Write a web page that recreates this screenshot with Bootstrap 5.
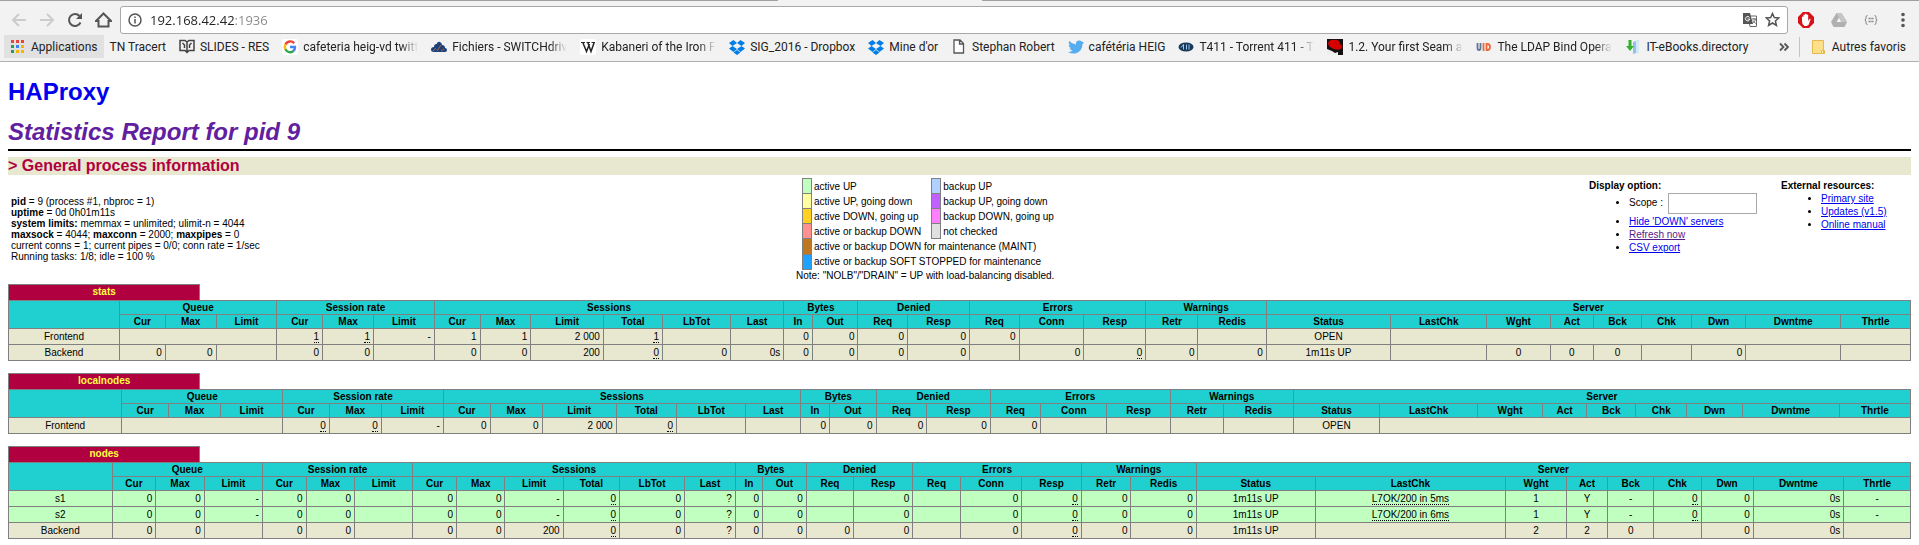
<!DOCTYPE html>
<html lang="en">
<head>
<meta charset="utf-8">
<meta name="viewport" content="width=device-width, initial-scale=1">
<title>Statistics Report for HAProxy</title>
<link rel="stylesheet" href="https://cdn.jsdelivr.net/npm/bootstrap@5.3.0/dist/css/bootstrap.min.css">
<style>
body{font:12px/14px "Liberation Sans",Arial,Helvetica,sans-serif;color:#000;background:#fff}
a{color:#00e}
/* browser frame */
.chrome-top{font:12px/16px Roboto,"Open Sans",sans-serif;background:#f2f2f2;border-bottom:1px solid #b0b0b0;color:#222}
.tabline{height:1px}
.tabline span{background:#a0a0a0}
.tabline .l{flex:778}.tabline .m{flex:204;background:#f2f2f2}.tabline .r{flex:937}
.toolbar{height:33px;padding:4px 11px 0 11px}
.toolbar button,.urlbox button{border:0;background:none;padding:0;line-height:0}
.nav-btns{gap:12px;width:109px}
.urlbox{height:28px;background:#fff;border:1px solid #a9a9a9;border-radius:3px;padding:0 7px}
.urlbox input{border:0;outline:0;padding:0;height:20px;font-family:"Open Sans",sans-serif;font-size:13px;line-height:20px;color:transparent;background:linear-gradient(90deg,#222 85px,#888 85px);-webkit-background-clip:text;background-clip:text}
.ext-btns{gap:17px;padding-left:10px;width:120px}
.marks{height:27px;padding:1px 13px 3px 4px}
.marks a{color:#222;text-decoration:none;gap:5px;margin-right:13px;flex:none}
.marks svg{flex:none}
.marks .apps{background:#e1e1e1;padding:0 7px;height:23px;gap:7px;margin-right:5px}
.marks .cut{width:115px;overflow:hidden;white-space:nowrap;-webkit-mask-image:linear-gradient(90deg,#000 85%,transparent);mask-image:linear-gradient(90deg,#000 85%,transparent)}
.marks .more{border:0;background:none;padding:0 10px 0 0;line-height:0}
.marks .other{border-left:1px solid #c4c4c4;padding-left:12px;margin:0;gap:7px;line-height:20px}
/* report */
.report{padding:16px 8px 0}
.report h1{font-size:24px;line-height:28px;font-weight:bold;margin:0 0 12px}
.report h1 a,.report h2 a{text-decoration:none}
.report h2{font-size:24px;line-height:28px;font-weight:bold;font-style:italic;margin:0}
.report h2 a{color:#6020a0}
.rule{border-top:2px solid #000;margin:3px 0 6px}
.report h3{font-size:16px;line-height:18px;font-weight:bold;color:#b00040;background:#e8e8d0;margin:0}
.info{display:grid;grid-template-columns:788fr 793fr 192fr 130fr;font-size:10px;line-height:11px;padding:3px 0}
.facts{padding:18px 3px 0}
.facts p,.legend p{margin:0}
.legend table{border-collapse:collapse;margin-left:6px}
.legend td{padding:2px;white-space:nowrap}
.legend .sw{width:9px;min-width:9px;border:1px solid gray;padding:2px 4px}
.legend .widest{padding-right:10px}
.opts{padding-top:2px}
.opts ul{margin:1px 0 0;padding-left:40px}
.opts li{margin-top:2px}
.opts .scope input{width:89px;height:21px;border:1px solid #a9a9a9;padding:1px;margin-left:5px;vertical-align:middle}
.opts .visited{color:#551a8b}
.tbl{width:100%;border-collapse:collapse;font-size:10px;line-height:11px;margin-bottom:12px}
.tbl caption{caption-side:top;padding:0;color:#ffff40;font-weight:bold;text-align:left;line-height:12px}
.tbl caption span{display:block;box-sizing:content-box;width:calc(10% - 6px);background:#b00040;border:1px solid gray;border-bottom:0;padding:1px 3px 2px;text-align:center}
.tbl th{background:#20d0d0;border:1px solid gray;padding:1px;font-weight:bold;text-align:center}
.tbl td{background:#e8e8d0;border:1px solid gray;padding:2px 3px;text-align:right;white-space:nowrap}
.tbl .up td{background:#c0ffc0}
.tbl td.ac{text-align:center;padding:2px 4px}
.tbl td.chk{text-align:center;padding:2px 5px}
.tbl u{text-decoration:none;border-bottom:1px dotted #000}
.c-up{background:#c0ffc0}.c-upd{background:#ffffa0}.c-dup{background:#ffd020}.c-down{background:#ff9090}
.c-mnt{background:#c07820}.c-soft{background:#20a0ff}.c-bup{background:#b0d0ff}.c-bupd{background:#c060ff}
.c-bdup{background:#ff80ff}.c-nc{background:#e0e0e0}
</style>
</head>
<body>
<header class="chrome-top">
<div class="tabline d-flex"><span class="l"></span><span class="m"></span><span class="r"></span></div>
<div class="toolbar d-flex align-items-center">
<div class="nav-btns d-flex align-items-center">
<button aria-label="Back"><svg width="16" height="16" viewBox="0 0 16 16" fill="none" stroke="#ccc" stroke-width="2"><path d="M15 8H2M8 2L2 8l6 6"/></svg></button>
<button aria-label="Forward"><svg width="16" height="16" viewBox="0 0 16 16" fill="none" stroke="#ccc" stroke-width="2"><path d="M1 8h13M8 2l6 6-6 6"/></svg></button>
<button aria-label="Reload"><svg width="16" height="16" viewBox="0 0 16 16" fill="none" stroke="#555" stroke-width="2"><path d="M13.500 10.500A6 6 0 1 1 12.500 4"/><path d="M15 1v6H9z" fill="#555" stroke="none"/></svg></button>
<button aria-label="Home"><svg width="17" height="16" viewBox="0 0 17 16" fill="none" stroke="#555" stroke-width="2"><path d="M1 9l7.500-7.500L16 9h-2.500v5.500h-10V9z"/></svg></button>
</div>
<div class="urlbox d-flex align-items-center flex-grow-1">
<svg class="me-2" width="14" height="14" viewBox="0 0 14 14" fill="none" stroke="#555" stroke-width="1.500"><circle cx="7" cy="7" r="6"/><path d="M7 6v4.500M7 3.500V5"/></svg>
<input class="flex-grow-1" type="text" aria-label="Address" value="192.168.42.42:1936">
<button class="me-2" aria-label="Translate"><svg width="14" height="14" viewBox="0 0 14 14"><path d="M5 3h8.500v10.500H7z" fill="#fff" stroke="#666"/><path d="M0 0h7l3 11H0z" fill="#555"/><path d="M6.500 4.500A2.200 2.200 0 1 0 6.500 7V6H4.500" fill="none" stroke="#fff"/><path d="M9 6h4M11 5v1M12.500 6c-.5 2-1.500 3-3 4M10 7.500l2.500 3" fill="none" stroke="#666"/></svg></button>
<button aria-label="Bookmark"><svg width="15" height="15" viewBox="0 0 15 15" fill="none" stroke="#555" stroke-width="1.500"><path d="M7.500 1.500l1.800 4.100 4.400.4-3.300 3 1 4.400-3.900-2.400-3.900 2.400 1-4.400-3.300-3 4.400-.4z"/></svg></button>
</div>
<div class="ext-btns d-flex align-items-center">
<button aria-label="Ad blocker"><svg width="16" height="16" viewBox="0 0 16 16"><path d="M5 0h6l5 5v6l-5 5H5l-5-5V5z" fill="#d9121a"/><path d="M4 9V5q.7-1 1.400 0v2V3q.8-1 1.600 0v3-4q.8-1 1.600 0v4-3q.8-1 1.600 0v6l1.300-2q1.300-.5 1 .7L10.500 13l-2 1h-2l-2-2z" fill="#fff"/></svg></button>
<button aria-label="Drive"><svg width="16" height="16" viewBox="0 0 16 16"><path d="M5.500 1h5L16 10l-2.500 5h-11L0 10z" fill="#b0b0b0"/><path d="M8 5.500L10.500 10h-5z" fill="#f2f2f2"/><path d="M5.500 1L11 10h5L10.500 1z" fill="#c6c6c6"/></svg></button>
<button aria-label="JSON"><svg width="14" height="12" viewBox="0 0 14 12" fill="none" stroke="#888"><path d="M3.500 1.500Q2 1.500 2 3v2L.8 6 2 7v2q0 1.500 1.500 1.500M10.500 1.500Q12 1.500 12 3v2l1.200 1L12 7v2q0 1.500-1.500 1.500"/><path d="M4.500 4.500h5M4.500 7.500h5" stroke-width="1.500" stroke-dasharray="1.400 .4"/></svg></button>
<button class="ms-auto" aria-label="Menu"><svg width="16" height="16" viewBox="0 0 16 16" fill="#555"><circle cx="8" cy="2.500" r="1.800"/><circle cx="8" cy="8" r="1.800"/><circle cx="8" cy="13.500" r="1.800"/></svg></button>
</div>
</div>
<nav class="marks d-flex align-items-center" aria-label="Bookmarks">
<a href="#" class="apps d-flex align-items-center"><svg width="13" height="13" viewBox="0 0 13 13"><path d="M0 0h3v3H0zM5 0h3v3H5zM10 0h3v3h-3z" fill="#e8453c"/><path d="M0 5h3v3H0zM0 10h3v3H0z" fill="#2a9d55"/><path d="M5 5h3v3H5z" fill="#3b83f0"/><path d="M10 5h3v3h-3zM5 10h3v3H5zM10 10h3v3h-3z" fill="#f5b400"/></svg>Applications</a>
<a href="#">TN Tracert</a>
<a href="#" class="d-flex align-items-center"><svg width="16" height="15" viewBox="0 0 16 15" fill="none" stroke="#444" stroke-width="1.500"><path d="M1 1.500h5l2 1.500 2-1.500h5v10h-5L8 13.500 6 11.500H1zM8 3v10M3.500 4l2 2v3M12.500 4l-2 2v3"/></svg>SLIDES - RES</a>
<a href="#" class="d-flex align-items-center"><svg width="16" height="16" viewBox="0 0 16 16" fill="none" stroke-width="2.400"><rect width="16" height="16" rx="2" fill="#fff"/><path d="M12.200 4.200A5.200 5.200 0 0 0 3.500 5.500" stroke="#ea4335"/><path d="M3.500 5.300a5.200 5.200 0 0 0 0 5.200" stroke="#fbbc05"/><path d="M3.400 10.300a5.200 5.200 0 0 0 8 1.700" stroke="#34a853"/><path d="M11.200 12.200A5 5 0 0 0 13 8H8" stroke="#4285f4"/></svg><span class="cut">cafeteria heig-vd twitt</span></a>
<a href="#" class="d-flex align-items-center"><svg width="16" height="16" viewBox="0 0 16 16"><path d="M3 13q-3 0-3-2.500T3 8q0-3 2.500-3Q7 2 9 3t2 3q3 0 3 3 2 0 2 2t-2 2z" fill="#1d3f7a"/><path d="M2 12l3-3M6 12l4-6M10 12l3-2" stroke="#b06a3a" fill="none"/></svg><span class="cut">Fichiers - SWITCHdrive</span></a>
<a href="#" class="d-flex align-items-center"><svg width="16" height="16" viewBox="0 0 16 16" fill="none" stroke="#222"><rect width="16" height="16" rx="2" fill="#fff" stroke="none"/><path d="M1 3.500h4M6.500 3.500h3.500M11.500 3.500H15"/><path d="M3 4l3.500 8.500L9.500 5M8 4l3 8.500L14 4" stroke-width="1.500"/></svg><span class="cut">Kabaneri of the Iron F</span></a>
<a href="#" class="d-flex align-items-center"><svg width="16" height="16" viewBox="0 0 16 16" fill="#007ee5"><path d="M4.500 1L8 4 3.500 7 0 4zM11.500 1L8 4l4.500 3L16 4zM3.500 7L8 10l-3.500 3L0 9.500zM12.500 7L8 10l3.500 3L16 9.500zM8 11l3.500 2.500L8 16l-3.500-2.500z"/></svg>SIG_2016 - Dropbox</a>
<a href="#" class="d-flex align-items-center"><svg width="16" height="16" viewBox="0 0 16 16" fill="#007ee5"><path d="M4.500 1L8 4 3.500 7 0 4zM11.500 1L8 4l4.500 3L16 4zM3.500 7L8 10l-3.500 3L0 9.500zM12.500 7L8 10l3.500 3L16 9.500zM8 11l3.500 2.500L8 16l-3.500-2.500z"/></svg>Mine d'or</a>
<a href="#" class="d-flex align-items-center"><svg width="16" height="15" viewBox="0 0 16 15" fill="#fff" stroke="#555" stroke-width="1.300"><path d="M3 1h6l3.500 3.500V14H3zM8.500 1v4h4"/></svg>Stephan Robert</a>
<a href="#" class="d-flex align-items-center"><svg width="16" height="16" viewBox="0 0 16 16" fill="#55acee"><path d="M16 3.500l-1.600 1.700C14.500 10 11 14.500 5.500 14.500q-3 0-5.500-1.500 3 .2 4.800-1.400-2.400-.2-3.100-2.300h1.400Q.7 8.500.6 6l1.500.4Q-.1 4.500 1.200 2 4 5.200 8 5.400 7.300 2 10.500 1.500q2-.2 3.200 1z"/></svg>cafétéria HEIG</a>
<a href="#" class="d-flex align-items-center"><svg width="16" height="16" viewBox="0 0 16 16"><ellipse cx="8" cy="8" rx="7.500" ry="4.500" fill="#173a5c"/><path d="M3 8.500l2.500-3v5M8.500 5.500v5M11 5.500v5" stroke="#9cc8e8" fill="none"/></svg><span class="cut">T411 - Torrent 411 - T</span></a>
<a href="#" class="d-flex align-items-center"><svg width="16" height="16" viewBox="0 0 16 16"><path d="M0 0h16v16H0z" fill="#111"/><path d="M1 4q2-4 6-3 5-1 6 4 3 1 2 4-3 3-8 1Q1 8 1 4z" fill="#d40000"/><path d="M0 10l5 2 3 2 3-1v3H0z" fill="#eee"/></svg><span class="cut">1.2. Your first Seam ap</span></a>
<a href="#" class="d-flex align-items-center"><svg width="16" height="16" viewBox="0 0 16 16" fill="none" stroke-width="1.800"><path d="M1.500 4v5q0 2 1.500 2t1.500-2V4" stroke="#5c7896"/><path d="M7.500 4v8M10.500 5v6h1q2.500 0 2.500-3t-2.500-3z" stroke="#f0683c"/></svg><span class="cut">The LDAP Bind Operat</span></a>
<a href="#" class="d-flex align-items-center"><svg width="16" height="16" viewBox="0 0 16 16"><path d="M8 3l6-2v12l-6 2z" fill="#8fc3e8"/><path d="M11 2l3-1v12l-3 1z" fill="#d5e9f6"/><path d="M3.500 1h3v6H9l-4 5-4-5h2.500z" fill="#34b02c"/></svg>IT-eBooks.directory</a>
<button class="more ms-auto" aria-label="More bookmarks"><svg width="10" height="10" viewBox="0 0 10 10" fill="none" stroke="#555" stroke-width="1.800"><path d="M1 1.500L4.500 5 1 8.500M5.500 1.500L9 5 5.500 8.500"/></svg></button>
<a href="#" class="other d-flex align-items-center"><svg width="13" height="14" viewBox="0 0 13 14"><path d="M.5.500h11v10h1v3H.5z" fill="#ffe08a" stroke="#e3b94a"/><path d="M9.500 10.500h2v3h-2z" fill="#fff3c4" stroke="#e3b94a"/></svg>Autres favoris</a>
</nav>
</header>

<main class="report">
<h1><a href="#">HAProxy</a></h1>
<h2><a href="#">Statistics Report for pid 9</a></h2>
<div class="rule"></div>
<h3>&gt; General process information</h3>
<section class="info">
<div class="facts">
<p><b>pid</b> = 9 (process #1, nbproc = 1)</p>
<p><b>uptime</b> = 0d 0h01m11s</p>
<p><b>system limits:</b> memmax = unlimited; ulimit-n = 4044</p>
<p><b>maxsock</b> = 4044; <b>maxconn</b> = 2000; <b>maxpipes</b> = 0</p>
<p>current conns = 1; current pipes = 0/0; conn rate = 1/sec</p>
<p>Running tasks: 1/8; idle = 100 %</p>
</div>
<div class="legend">
<table>
<tr><td class="sw c-up"></td><td>active UP</td><td class="sw c-bup"></td><td>backup UP</td></tr>
<tr><td class="sw c-upd"></td><td>active UP, going down</td><td class="sw c-bupd"></td><td>backup UP, going down</td></tr>
<tr><td class="sw c-dup"></td><td>active DOWN, going up</td><td class="sw c-bdup"></td><td>backup DOWN, going up</td></tr>
<tr><td class="sw c-down"></td><td class="widest">active or backup DOWN</td><td class="sw c-nc"></td><td>not checked</td></tr>
<tr><td class="sw c-mnt"></td><td colspan="3">active or backup DOWN for maintenance (MAINT)</td></tr>
<tr><td class="sw c-soft"></td><td colspan="3">active or backup SOFT STOPPED for maintenance</td></tr>
</table>
<p>Note: "NOLB"/"DRAIN" = UP with load-balancing disabled.</p>
</div>
<div class="opts"><b>Display option:</b>
<ul>
<li class="scope"><label for="scope">Scope :</label><input id="scope" type="text"></li>
<li><a href="#">Hide 'DOWN' servers</a></li>
<li><a href="#" class="visited">Refresh now</a></li>
<li><a href="#">CSV export</a></li>
</ul></div>
<div class="opts"><b>External resources:</b>
<ul>
<li><a href="#">Primary site</a></li>
<li><a href="#">Updates (v1.5)</a></li>
<li><a href="#">Online manual</a></li>
</ul></div>
</section>

<table class="tbl">
<caption><span>stats</span></caption>
<thead>
<tr><th rowspan="2"></th><th colspan="3">Queue</th><th colspan="3">Session rate</th><th colspan="6">Sessions</th><th colspan="2">Bytes</th><th colspan="2">Denied</th><th colspan="3">Errors</th><th colspan="2">Warnings</th><th colspan="9">Server</th></tr>
<tr><th>Cur</th><th>Max</th><th>Limit</th><th>Cur</th><th>Max</th><th>Limit</th><th>Cur</th><th>Max</th><th>Limit</th><th>Total</th><th>LbTot</th><th>Last</th><th>In</th><th>Out</th><th>Req</th><th>Resp</th><th>Req</th><th>Conn</th><th>Resp</th><th>Retr</th><th>Redis</th><th>Status</th><th>LastChk</th><th>Wght</th><th>Act</th><th>Bck</th><th>Chk</th><th>Dwn</th><th>Dwntme</th><th>Thrtle</th></tr>
</thead>
<tbody>
<tr><td class="ac">Frontend</td><td colspan="3"></td><td><u>1</u></td><td><u>1</u></td><td>-</td><td>1</td><td>1</td><td>2 000</td><td><u>1</u></td><td></td><td></td><td>0</td><td>0</td><td>0</td><td>0</td><td>0</td><td></td><td></td><td></td><td></td><td class="ac">OPEN</td><td colspan="8"></td></tr>
<tr><td class="ac">Backend</td><td>0</td><td>0</td><td></td><td>0</td><td>0</td><td></td><td>0</td><td>0</td><td>200</td><td><u>0</u></td><td>0</td><td>0s</td><td>0</td><td>0</td><td>0</td><td>0</td><td></td><td>0</td><td><u>0</u></td><td>0</td><td>0</td><td class="ac">1m11s UP</td><td></td><td class="ac">0</td><td class="ac">0</td><td class="ac">0</td><td></td><td>0</td><td></td><td></td></tr>
</tbody>
</table>

<table class="tbl">
<caption><span>localnodes</span></caption>
<thead>
<tr><th rowspan="2"></th><th colspan="3">Queue</th><th colspan="3">Session rate</th><th colspan="6">Sessions</th><th colspan="2">Bytes</th><th colspan="2">Denied</th><th colspan="3">Errors</th><th colspan="2">Warnings</th><th colspan="9">Server</th></tr>
<tr><th>Cur</th><th>Max</th><th>Limit</th><th>Cur</th><th>Max</th><th>Limit</th><th>Cur</th><th>Max</th><th>Limit</th><th>Total</th><th>LbTot</th><th>Last</th><th>In</th><th>Out</th><th>Req</th><th>Resp</th><th>Req</th><th>Conn</th><th>Resp</th><th>Retr</th><th>Redis</th><th>Status</th><th>LastChk</th><th>Wght</th><th>Act</th><th>Bck</th><th>Chk</th><th>Dwn</th><th>Dwntme</th><th>Thrtle</th></tr>
</thead>
<tbody>
<tr><td class="ac">Frontend</td><td colspan="3"></td><td><u>0</u></td><td><u>0</u></td><td>-</td><td>0</td><td>0</td><td>2 000</td><td><u>0</u></td><td></td><td></td><td>0</td><td>0</td><td>0</td><td>0</td><td>0</td><td></td><td></td><td></td><td></td><td class="ac">OPEN</td><td colspan="8"></td></tr>
</tbody>
</table>

<table class="tbl mb-0">
<caption><span>nodes</span></caption>
<thead>
<tr><th rowspan="2"></th><th colspan="3">Queue</th><th colspan="3">Session rate</th><th colspan="6">Sessions</th><th colspan="2">Bytes</th><th colspan="2">Denied</th><th colspan="3">Errors</th><th colspan="2">Warnings</th><th colspan="9">Server</th></tr>
<tr><th>Cur</th><th>Max</th><th>Limit</th><th>Cur</th><th>Max</th><th>Limit</th><th>Cur</th><th>Max</th><th>Limit</th><th>Total</th><th>LbTot</th><th>Last</th><th>In</th><th>Out</th><th>Req</th><th>Resp</th><th>Req</th><th>Conn</th><th>Resp</th><th>Retr</th><th>Redis</th><th>Status</th><th>LastChk</th><th>Wght</th><th>Act</th><th>Bck</th><th>Chk</th><th>Dwn</th><th>Dwntme</th><th>Thrtle</th></tr>
</thead>
<tbody>
<tr class="up"><td class="ac">s1</td><td>0</td><td>0</td><td>-</td><td>0</td><td>0</td><td></td><td>0</td><td>0</td><td>-</td><td><u>0</u></td><td>0</td><td>?</td><td>0</td><td>0</td><td></td><td>0</td><td></td><td>0</td><td><u>0</u></td><td>0</td><td>0</td><td class="ac">1m11s UP</td><td class="chk"><u>L7OK/200 in 5ms</u></td><td class="ac">1</td><td class="ac">Y</td><td class="ac">-</td><td><u>0</u></td><td>0</td><td>0s</td><td class="ac">-</td></tr>
<tr class="up"><td class="ac">s2</td><td>0</td><td>0</td><td>-</td><td>0</td><td>0</td><td></td><td>0</td><td>0</td><td>-</td><td><u>0</u></td><td>0</td><td>?</td><td>0</td><td>0</td><td></td><td>0</td><td></td><td>0</td><td><u>0</u></td><td>0</td><td>0</td><td class="ac">1m11s UP</td><td class="chk"><u>L7OK/200 in 6ms</u></td><td class="ac">1</td><td class="ac">Y</td><td class="ac">-</td><td><u>0</u></td><td>0</td><td>0s</td><td class="ac">-</td></tr>
<tr><td class="ac">Backend</td><td>0</td><td>0</td><td></td><td>0</td><td>0</td><td></td><td>0</td><td>0</td><td>200</td><td><u>0</u></td><td>0</td><td>?</td><td>0</td><td>0</td><td>0</td><td>0</td><td></td><td>0</td><td><u>0</u></td><td>0</td><td>0</td><td class="ac">1m11s UP</td><td></td><td class="ac">2</td><td class="ac">2</td><td class="ac">0</td><td></td><td>0</td><td>0s</td><td></td></tr>
</tbody>
</table>
</main>
<script src="https://cdn.jsdelivr.net/npm/bootstrap@5.3.0/dist/js/bootstrap.bundle.min.js"></script>
</body>
</html>
